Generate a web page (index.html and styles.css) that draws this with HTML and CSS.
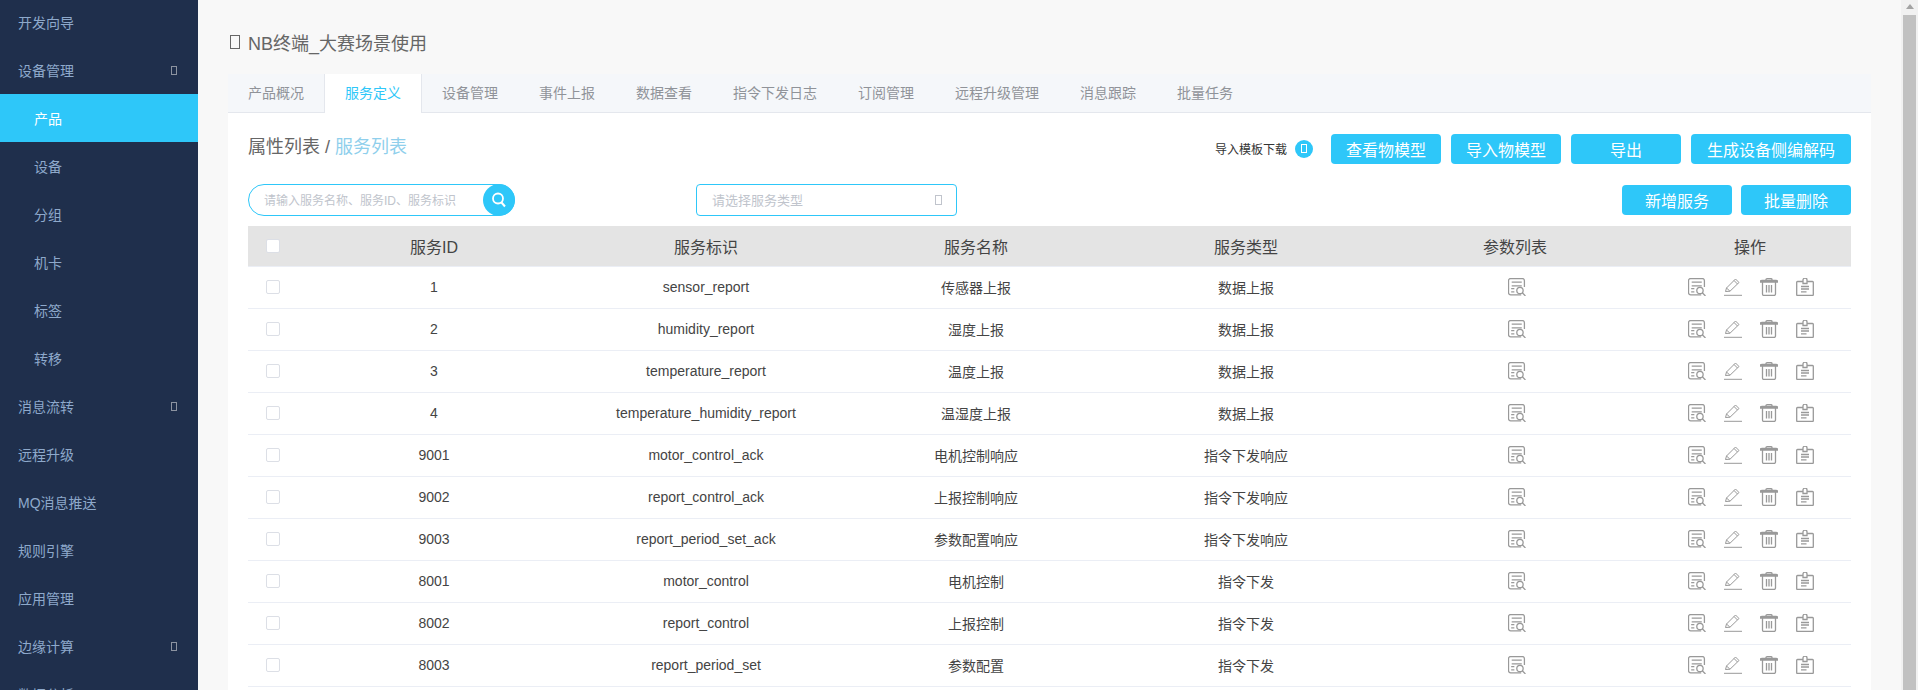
FILE: index.html
```html
<!DOCTYPE html>
<html lang="zh-CN">
<head>
<meta charset="utf-8">
<title>NB终端_大赛场景使用</title>
<link rel="stylesheet" href="styles.css">
</head>
<body>
<svg class="sprite" aria-hidden="true">
  <symbol id="i-doc" viewBox="0.5 0.5 17 17">
    <path d="M13 16.500H3A2 2 0 0 1 1 14.500V3A2 2 0 0 1 3 1h11A2 2 0 0 1 16 3V9M4 4.500h9.500M4 8h9.500M3.500 10.500h3M3.500 13.500h3" fill="none" stroke="currentColor" stroke-width="1.200"/>
    <circle cx="11.800" cy="12.300" r="3" fill="#fff" stroke="currentColor" stroke-width="1.200"/>
    <path d="M14 14.500l3 3" fill="none" stroke="currentColor" stroke-width="1.200"/>
  </symbol>
  <symbol id="i-pen" viewBox="0 0 18 18">
    <path d="M1.500 13.500L2.500 10 11.500 1 15 4.500 6 13.200 1.500 13.500ZM10 2.500l3.500 3.500M2.500 10L5.800 13" fill="none" stroke="currentColor" stroke-width="1"/>
    <path d="M0 17.300h18" fill="none" stroke="currentColor" stroke-width="1"/>
  </symbol>
  <symbol id="i-trash" viewBox="0 0 18 18">
    <path d="M0 4Q0 2.500 2 2.500h14Q18 2.500 18 4M6 2.500V1.500Q6 .7 7 .7h4q1 0 1 .8v1M0 4h18M2.500 4V16a1.500 1.500 0 0 0 1.500 1.500h10a1.500 1.500 0 0 0 1.500-1.500V4M6.500 7v7.500M9 7v7.500M11.500 7v7.500" fill="none" stroke="currentColor" stroke-width="1.300"/>
  </symbol>
  <symbol id="i-clip" viewBox="0 0 18 18">
    <path d="M6.500 3.500H1.500A.8.8 0 0 0 .7 4.300V16.700a.8.8 0 0 0 .8.8h15a.8.8 0 0 0 .8-.8V4.300a.8.8 0 0 0-.8-.8H11.500M7 3.500V2a2 2 0 0 1 4 0V5.500H7ZM5 8.500h8M5 11h8M5 13.800h5.500" fill="none" stroke="currentColor" stroke-width="1.300"/>
  </symbol>
</svg>

<div class="app">
  <nav class="sidebar">
    <a class="nav-item">开发向导</a>
    <a class="nav-item">设备管理<i class="tofu nav-arrow"></i></a>
    <a class="nav-item sub active">产品</a>
    <a class="nav-item sub">设备</a>
    <a class="nav-item sub">分组</a>
    <a class="nav-item sub">机卡</a>
    <a class="nav-item sub">标签</a>
    <a class="nav-item sub">转移</a>
    <a class="nav-item">消息流转<i class="tofu nav-arrow"></i></a>
    <a class="nav-item">远程升级</a>
    <a class="nav-item">MQ消息推送</a>
    <a class="nav-item">规则引擎</a>
    <a class="nav-item">应用管理</a>
    <a class="nav-item">边缘计算<i class="tofu nav-arrow"></i></a>
    <a class="nav-item">数据分析<i class="tofu nav-arrow"></i></a>
  </nav>

  <main class="main">
    <h1 class="page-title"><i class="tofu title-icon"></i>NB终端_大赛场景使用</h1>
    <section class="card">
      <div class="tabs">
        <a class="tab">产品概况</a>
        <a class="tab active">服务定义</a>
        <a class="tab">设备管理</a>
        <a class="tab">事件上报</a>
        <a class="tab">数据查看</a>
        <a class="tab">指令下发日志</a>
        <a class="tab">订阅管理</a>
        <a class="tab">远程升级管理</a>
        <a class="tab">消息跟踪</a>
        <a class="tab">批量任务</a>
      </div>
      <div class="card-body">
        <div class="head-row">
          <div class="crumb">属性列表 / <span class="crumb-link">服务列表</span></div>
          <div class="head-actions">
            <span class="tpl-label">导入模板下载</span>
            <span class="tpl-dot"><i class="tofu tpl-icon"></i></span>
            <button class="btn">查看物模型</button>
            <button class="btn">导入物模型</button>
            <button class="btn">导出</button>
            <button class="btn btn-wide">生成设备侧编解码</button>
          </div>
        </div>
        <div class="filter-row">
          <div class="search">
            <span class="search-text">请输入服务名称、服务ID、服务标识</span>
            <span class="search-btn">
              <svg width="18" height="18" viewBox="0 0 18 18"><circle cx="8" cy="7.500" r="5" fill="none" stroke="#fff" stroke-width="1.800"/><path d="M11.500 11.500l3.500 4" fill="none" stroke="#fff" stroke-width="2"/></svg>
            </span>
          </div>
          <div class="select"><span>请选择服务类型</span><i class="tofu select-icon"></i></div>
          <div class="filter-actions">
            <button class="btn">新增服务</button>
            <button class="btn">批量删除</button>
          </div>
        </div>
        <table class="grid">
          <colgroup>
            <col class="c-check"><col class="c-id"><col class="c-key"><col class="c-name"><col class="c-type"><col class="c-param"><col class="c-ops">
          </colgroup>
          <thead>
            <tr><th class="check-cell"><span class="check head-check"></span></th><th>服务ID</th><th>服务标识</th><th>服务名称</th><th>服务类型</th><th>参数列表</th><th>操作</th></tr>
          </thead>
          <tbody id="rows">
            <tr><td class="check-cell"><span class="check"></span></td><td>1</td><td>sensor_report</td><td>传感器上报</td><td>数据上报</td><td><svg class="ic ic-param"><use href="#i-doc"/></svg></td><td><span class="ops"><svg class="ic"><use href="#i-doc"/></svg><svg class="ic"><use href="#i-pen"/></svg><svg class="ic"><use href="#i-trash"/></svg><svg class="ic"><use href="#i-clip"/></svg></span></td></tr>
            <tr><td class="check-cell"><span class="check"></span></td><td>2</td><td>humidity_report</td><td>湿度上报</td><td>数据上报</td><td><svg class="ic ic-param"><use href="#i-doc"/></svg></td><td><span class="ops"><svg class="ic"><use href="#i-doc"/></svg><svg class="ic"><use href="#i-pen"/></svg><svg class="ic"><use href="#i-trash"/></svg><svg class="ic"><use href="#i-clip"/></svg></span></td></tr>
            <tr><td class="check-cell"><span class="check"></span></td><td>3</td><td>temperature_report</td><td>温度上报</td><td>数据上报</td><td><svg class="ic ic-param"><use href="#i-doc"/></svg></td><td><span class="ops"><svg class="ic"><use href="#i-doc"/></svg><svg class="ic"><use href="#i-pen"/></svg><svg class="ic"><use href="#i-trash"/></svg><svg class="ic"><use href="#i-clip"/></svg></span></td></tr>
            <tr><td class="check-cell"><span class="check"></span></td><td>4</td><td>temperature_humidity_report</td><td>温湿度上报</td><td>数据上报</td><td><svg class="ic ic-param"><use href="#i-doc"/></svg></td><td><span class="ops"><svg class="ic"><use href="#i-doc"/></svg><svg class="ic"><use href="#i-pen"/></svg><svg class="ic"><use href="#i-trash"/></svg><svg class="ic"><use href="#i-clip"/></svg></span></td></tr>
            <tr><td class="check-cell"><span class="check"></span></td><td>9001</td><td>motor_control_ack</td><td>电机控制响应</td><td>指令下发响应</td><td><svg class="ic ic-param"><use href="#i-doc"/></svg></td><td><span class="ops"><svg class="ic"><use href="#i-doc"/></svg><svg class="ic"><use href="#i-pen"/></svg><svg class="ic"><use href="#i-trash"/></svg><svg class="ic"><use href="#i-clip"/></svg></span></td></tr>
            <tr><td class="check-cell"><span class="check"></span></td><td>9002</td><td>report_control_ack</td><td>上报控制响应</td><td>指令下发响应</td><td><svg class="ic ic-param"><use href="#i-doc"/></svg></td><td><span class="ops"><svg class="ic"><use href="#i-doc"/></svg><svg class="ic"><use href="#i-pen"/></svg><svg class="ic"><use href="#i-trash"/></svg><svg class="ic"><use href="#i-clip"/></svg></span></td></tr>
            <tr><td class="check-cell"><span class="check"></span></td><td>9003</td><td>report_period_set_ack</td><td>参数配置响应</td><td>指令下发响应</td><td><svg class="ic ic-param"><use href="#i-doc"/></svg></td><td><span class="ops"><svg class="ic"><use href="#i-doc"/></svg><svg class="ic"><use href="#i-pen"/></svg><svg class="ic"><use href="#i-trash"/></svg><svg class="ic"><use href="#i-clip"/></svg></span></td></tr>
            <tr><td class="check-cell"><span class="check"></span></td><td>8001</td><td>motor_control</td><td>电机控制</td><td>指令下发</td><td><svg class="ic ic-param"><use href="#i-doc"/></svg></td><td><span class="ops"><svg class="ic"><use href="#i-doc"/></svg><svg class="ic"><use href="#i-pen"/></svg><svg class="ic"><use href="#i-trash"/></svg><svg class="ic"><use href="#i-clip"/></svg></span></td></tr>
            <tr><td class="check-cell"><span class="check"></span></td><td>8002</td><td>report_control</td><td>上报控制</td><td>指令下发</td><td><svg class="ic ic-param"><use href="#i-doc"/></svg></td><td><span class="ops"><svg class="ic"><use href="#i-doc"/></svg><svg class="ic"><use href="#i-pen"/></svg><svg class="ic"><use href="#i-trash"/></svg><svg class="ic"><use href="#i-clip"/></svg></span></td></tr>
            <tr><td class="check-cell"><span class="check"></span></td><td>8003</td><td>report_period_set</td><td>参数配置</td><td>指令下发</td><td><svg class="ic ic-param"><use href="#i-doc"/></svg></td><td><span class="ops"><svg class="ic"><use href="#i-doc"/></svg><svg class="ic"><use href="#i-pen"/></svg><svg class="ic"><use href="#i-trash"/></svg><svg class="ic"><use href="#i-clip"/></svg></span></td></tr>
          </tbody>
        </table>
      </div>
    </section>
  </main>

  <div class="scrollbar">
    <span class="scroll-arrow"></span>
    <span class="scroll-thumb"></span>
  </div>
</div>
</body>
</html>
```

FILE: styles.css
```css
* { box-sizing: border-box; }
html, body { margin: 0; height: 690px; overflow: hidden; }
body {
  font-family: "Liberation Sans", "Noto Sans CJK SC", sans-serif;
  font-size: 14px;
  color: #333;
  background: #f8f8f8;
}
.sprite { display: none; }
.app { display: flex; height: 690px; overflow: hidden; }

.tofu { display: inline-block; border: 1px solid currentColor; }

/* sidebar */
.sidebar {
  flex: 0 0 198px;
  background: #1f2f4c;
  margin-top: -2px;
  height: 692px;
  overflow: hidden;
}
.nav-item {
  display: flex;
  align-items: center;
  justify-content: space-between;
  height: 48px;
  padding: 0 21px 0 18px;
  color: #8ea9cb;
  font-size: 14px;
}
.nav-item.sub { padding-left: 34px; }
.nav-item.active { background: #2ec7f9; color: #fff; }
.nav-arrow { width: 6px; height: 9px; color: #8c93a0; }

/* main */
.main { flex: 1 1 auto; padding: 0 30px; min-width: 0; }
.page-title {
  display: flex;
  align-items: center;
  height: 74px;
  margin: 0;
  padding: 9px 0 0 2px;
  font-size: 18px;
  font-weight: 400;
  color: #666;
}
.title-icon { width: 10px; height: 14px; margin-right: 8px; color: #666; }
.card { background: #fff; height: 616px; }

.tabs {
  display: flex;
  height: 39px;
  background: #f5f7fa;
  border-bottom: 1px solid #e4e7ed;
}
.tab {
  height: 39px;
  line-height: 38px;
  padding: 0 21px 0 20px;
  color: #909399;
  font-size: 14px;
}
.tab.active {
  background: #fff;
  color: #2ec7f9;
  border-left: 1px solid #e4e7ed;
  border-right: 1px solid #e4e7ed;
  padding: 0 20px 0 20px;
  margin-left: -1px;
}

.card-body { padding: 0 20px; }
.head-row { display: flex; justify-content: space-between; align-items: center; height: 71px; }
.crumb { font-size: 18px; color: #666; margin-top: -8px; }
.crumb-link { color: #8fcfec; }
.head-actions { display: flex; align-items: center; }
.tpl-label { font-size: 12px; color: #333; margin-right: 8px; }
.tpl-dot {
  display: flex; align-items: center; justify-content: center;
  width: 18px; height: 18px; margin-right: 18px;
  border-radius: 50%;
  background: #2ec7f9; color: #fff;
}
.tpl-icon { width: 6px; height: 9px; }

.btn {
  width: 110px;
  height: 30px;
  margin: 0 0 0 10px;
  padding: 0;
  border: 0;
  border-radius: 4px;
  background: #2ec7f9;
  color: #fff;
  font: inherit;
  font-size: 16px;
}
.tpl-dot + .btn { margin-left: 0; }
.btn-wide { width: 160px; }

.filter-row { display: flex; align-items: center; height: 32px; }
.search {
  display: flex; align-items: center; justify-content: space-between;
  width: 267px; height: 32px;
  padding-left: 15px;
  border: 1px solid #2ec7f9;
  border-radius: 16px;
  margin-right: 181px;
}
.search-text { font-size: 12px; color: #c0c4cc; padding-bottom: 1px; }
.search-btn {
  display: flex; align-items: center; justify-content: center;
  width: 32px; height: 32px; margin-right: -1px;
  border-radius: 50%;
  background: #2ec7f9;
}
.select {
  display: flex; align-items: center; justify-content: space-between;
  width: 261px; height: 32px;
  padding: 0 14px 1px 15px;
  border: 1px solid #2ec7f9;
  border-radius: 4px;
  font-size: 13px;
  color: #c0c4cc;
}
.select-icon { width: 7px; height: 10px; }
.filter-actions { margin-left: auto; display: flex; }
.filter-actions .btn + .btn { margin-left: 9px; }

.grid {
  width: 1603px;
  margin-top: 10px;
  border-collapse: collapse;
  table-layout: fixed;
  text-align: center;
  font-size: 14px;
  color: #444;
}
.c-check { width: 49px; }
.c-id { width: 274px; }
.c-key { width: 270px; }
.c-name { width: 270px; }
.c-type { width: 270px; }
.c-param { width: 268px; }
.c-ops { width: 202px; }
.grid th {
  height: 40px;
  padding: 0;
  background: #e4e4e4;
  font-size: 16px;
  font-weight: 400;
  color: #444;
  border-bottom: 1px solid #ebeef5;
}
.grid td { height: 42px; padding: 0; border-bottom: 1px solid #ebeef5; }
.check-cell { text-align: left; }
.check {
  display: block;
  width: 14px; height: 14px;
  margin-left: 18px;
  border: 1px solid #dcdfe6;
  border-radius: 2px;
  background: #fff;
}
.ic { display: inline-block; width: 18px; height: 18px; color: #999; vertical-align: middle; overflow: visible; }
.ic-param { margin-left: 3px; }
.ops { display: inline-flex; gap: 18px; margin-left: 2px; vertical-align: middle; }

/* page scrollbar */
.scrollbar {
  flex: 0 0 17px;
  background: #f1f1f1;
  display: flex;
  flex-direction: column;
  align-items: center;
}
.scroll-arrow {
  width: 0; height: 0;
  margin-top: 4px;
  border-left: 4px solid transparent;
  border-right: 4px solid transparent;
  border-bottom: 5px solid #a3a3a3;
}
.scroll-thumb { width: 13px; flex: 1; margin-top: 6px; background: #c1c1c1; }
```
